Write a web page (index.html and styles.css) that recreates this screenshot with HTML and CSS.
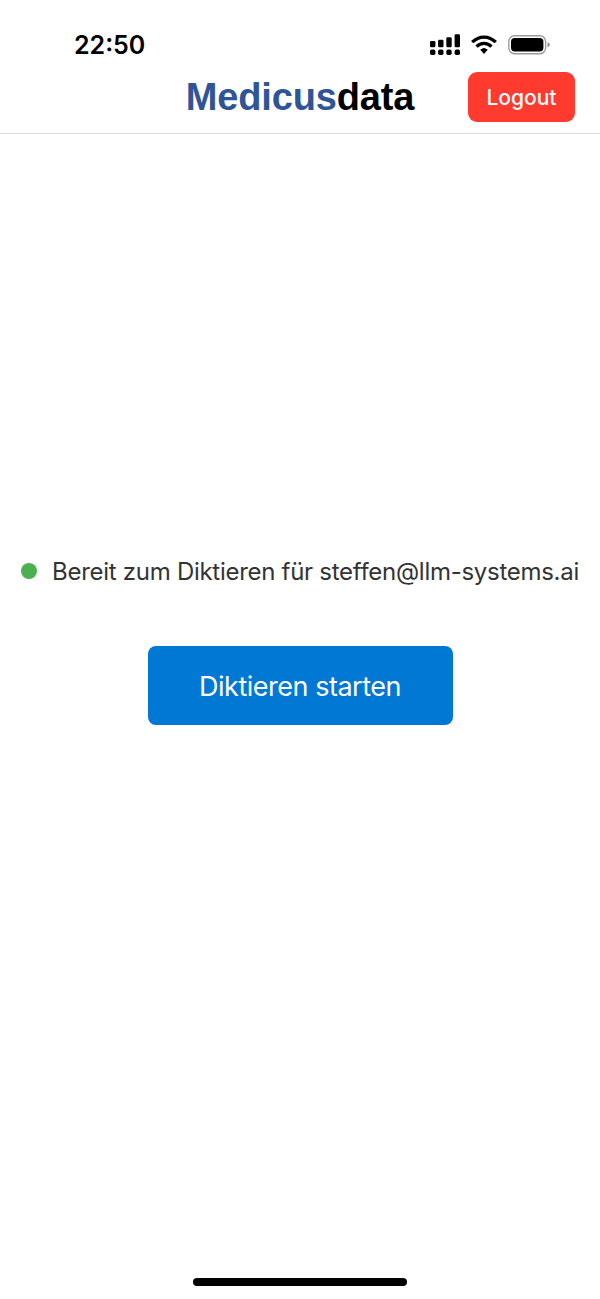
FILE: index.html
```html
<!DOCTYPE html>
<html lang="de">
<head>
<meta charset="utf-8">
<title>Medicusdata</title>
<link rel="stylesheet" href="styles.css">
</head>
<body>
<div class="statusbar">
  <span class="time">22:50</span>
  <svg class="indicators" width="124" height="26" viewBox="0 0 124 26" aria-hidden="true">
    <g fill="#000">
      <rect x="2" y="10" width="5.4" height="6.2" rx="1.3"/>
      <rect x="10.1" y="8.7" width="5.4" height="7.5" rx="1.3"/>
      <rect x="18.3" y="6.3" width="5.4" height="9.9" rx="1.3"/>
      <rect x="26.6" y="3.3" width="5.4" height="12.9" rx="1.3"/>
      <rect x="2" y="18.6" width="5.4" height="5.4" rx="1.8"/>
      <rect x="10.1" y="18.6" width="5.4" height="5.4" rx="1.8"/>
      <rect x="18.3" y="18.6" width="5.4" height="5.4" rx="1.8"/>
      <rect x="26.6" y="18.6" width="5.4" height="5.4" rx="1.8"/>
      <path d="M52.8 18.8Q56 16.3 59.2 18.8L56 22.4Z" stroke="#000" stroke-width="1" stroke-linejoin="round"/>
    </g>
    <g fill="none" stroke="#000" stroke-width="3.3">
      <path d="M44.2 11.2C51 4.3 61 4.3 67.8 11.2"/>
      <path d="M48.6 15.6C52.8 11.4 59.2 11.4 63.4 15.6"/>
    </g>
    <rect x="80.8" y="4.8" width="36.8" height="17.9" rx="5.6" fill="none" stroke="#9b9b9b" stroke-width="1.4"/>
    <rect x="83" y="7" width="32.4" height="13.5" rx="3.7"/>
    <path d="M119.500 11.200Q121.800 12 121.800 13.800T119.500 16.400Z" fill="#8d8d8d"/>
  </svg>
</div>
<header class="header">
  <h1 class="brand"><span class="brand-accent">Medicus</span>data</h1>
  <button class="logout">Logout</button>
</header>
<main class="main">
  <p class="status"><span class="dot"></span><span class="status-text">Bereit zum Diktieren für steffen@llm-systems.ai</span></p>
  <button class="start">Diktieren starten</button>
</main>
<footer class="home"><div class="home-bar"></div></footer>
</body>
</html>
```
FILE: styles.css
```css
* { box-sizing: border-box; }
body {
  margin: 0;
  height: 1299px;
  display: flex;
  flex-direction: column;
  background: #fff;
  font-family: Inter, "Liberation Sans", sans-serif;
}
button { border: 0; font-family: inherit; padding: 0; }
.statusbar {
  height: 62px;
  padding: 31px 48px 0 74px;
  display: flex;
  justify-content: space-between;
  align-items: flex-start;
}
.time {
  font-size: 25px;
  line-height: 28px;
  font-weight: 600;
}
.header {
  height: 72px;
  padding: 10px 25px 0;
  border-bottom: 1px solid #dedede;
  display: grid;
  grid-template-columns: 107px 1fr 107px;
  align-items: start;
}
.brand {
  grid-column: 2;
  margin: 0;
  text-align: center;
  font: bold 38px/51px "Liberation Sans", Arial, sans-serif;
  letter-spacing: -0.15px;
  color: #000;
}
.brand-accent { color: #2f5597; }
.logout {
  height: 50px;
  border-radius: 9px;
  background: #ff3b30;
  color: #fff;
  font-size: 21px;
  font-weight: 500;
}
.main {
  flex: 1;
  padding-top: 421px;
  display: flex;
  flex-direction: column;
  align-items: center;
}
.status {
  margin: 0 0 59px;
  width: 558px;
  display: flex;
  align-items: center;
  gap: 15px;
  color: #333;
  font-size: 24px;
  line-height: 32px;
  letter-spacing: -0.28px;
  white-space: nowrap;
}
.status-text { padding-top: 1px; margin-bottom: -1px; }
.dot {
  flex: none;
  width: 16px;
  height: 16px;
  border-radius: 50%;
  background: #4caf50;
}
.start {
  width: 305px;
  height: 79px;
  padding-top: 1px;
  border-radius: 8px;
  background: #0078d4;
  color: #fff;
  font-size: 27px;
  letter-spacing: -0.48px;
}
.home {
  height: 21px;
  display: flex;
  justify-content: center;
}
.home-bar {
  width: 214px;
  height: 8px;
  border-radius: 4px;
  background: #000;
}
```
